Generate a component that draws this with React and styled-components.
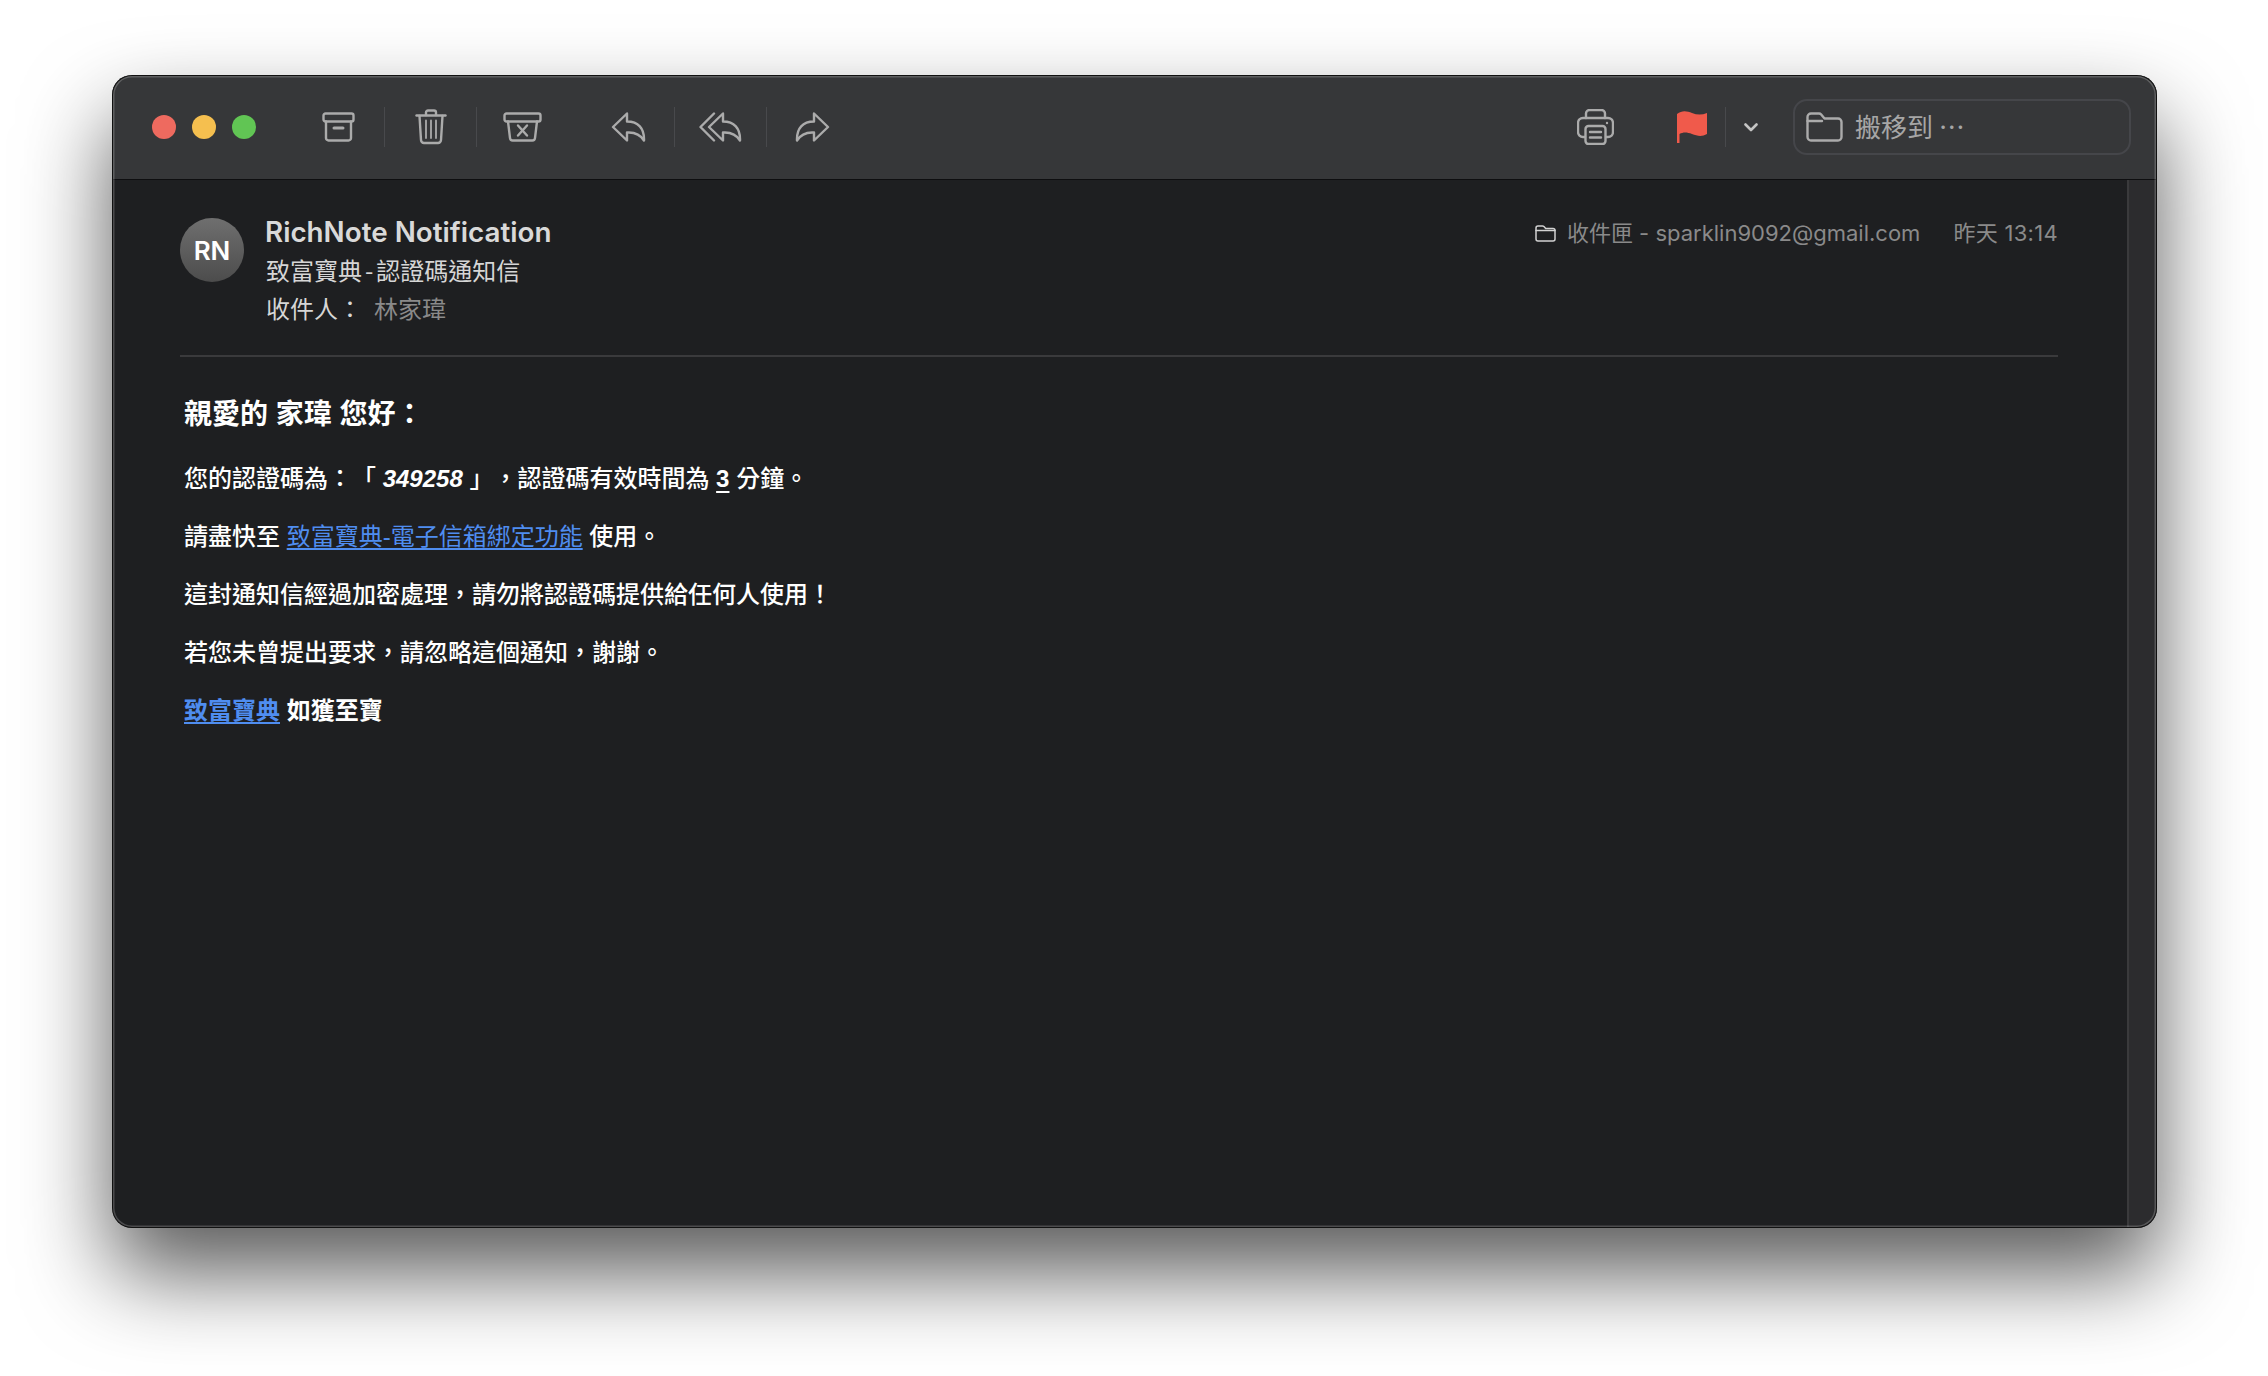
import React from "react";
import styled, { createGlobalStyle } from "styled-components";

const CJK = `"Noto Sans CJK TC", "Noto Sans CJK SC", sans-serif`;

const GlobalStyle = createGlobalStyle`
  html, body {
    margin: 0;
    background: #fff;
  }
`;

const Page = styled.div`
  box-sizing: border-box;
  width: 2268px;
  height: 1376px;
  padding: 75px 111px 0 112px;
  overflow: hidden;
  background: #fff;
`;

const Window = styled.div`
  width: 2045px;
  height: 1153px;
  display: flex;
  flex-direction: column;
  position: relative;
  border-radius: 20px;
  overflow: hidden;
  background: #1e1f21;
  box-shadow: 0 45px 88px rgba(0, 0, 0, 0.65);

  &::after {
    content: "";
    position: absolute;
    inset: 0;
    border-radius: 20px;
    box-shadow: inset 0 0 0 1px #111, inset 0 0 0 2.5px rgba(255, 255, 255, 0.2);
    pointer-events: none;
  }
`;

const Toolbar = styled.div`
  height: 105px;
  flex: none;
  display: flex;
  align-items: center;
  background: #363739;
  border-bottom: 1px solid #0e0e10;
  box-sizing: border-box;
  padding-left: 40px;
`;

const Lights = styled.div`
  display: flex;
  gap: 16px;
  margin-right: 37px;
`;

const Light = styled.span`
  width: 24px;
  height: 24px;
  border-radius: 50%;
  background: ${(p) => p.$color};
`;

const ToolGroup = styled.div`
  display: flex;
  align-items: center;
  margin-right: ${(p) => p.$gap || 0}px;
`;

const ToolSlot = styled.div`
  width: ${(p) => p.$width || 92}px;
  height: 40px;
  display: flex;
  align-items: center;
  justify-content: center;
  box-sizing: border-box;
  border-right: 1px solid ${(p) => (p.$divider ? "#48494c" : "transparent")};
`;

const Spacer = styled.div`
  flex: 1;
`;

const Glyph = styled.svg`
  display: block;
  flex: none;
  fill: none;
  stroke: ${(p) => p.$stroke || "#ababab"};
  stroke-width: ${(p) => p.$weight || 2.4};
  stroke-linecap: round;
  stroke-linejoin: round;
`;

const MoveBox = styled.div`
  width: 338px;
  height: 56px;
  margin: 0 26px 0 17px;
  box-sizing: border-box;
  display: flex;
  align-items: center;
  gap: 12px;
  padding-left: 11px;
  border: 2px solid #45464a;
  border-radius: 14px;
  color: #a6a6a6;
  font: 400 26px ${CJK};
  text-spacing-trim: space-all;
`;

const MoveLabel = styled.span`
  position: relative;
  top: -2px;
`;

const Main = styled.div`
  flex: 1;
  display: flex;
  min-height: 0;
`;

const Message = styled.div`
  flex: 1;
  box-sizing: border-box;
  padding: 38px 69px 0 68px;
`;

const Scroller = styled.div`
  width: 30px;
  flex: none;
  background: #2c2c2e;
  border-left: 2px solid #3a3a3c;
  box-sizing: border-box;
`;

const Header = styled.div`
  display: flex;
  align-items: flex-start;
  gap: 21px;
  height: 139px;
  border-bottom: 2px solid #3a3a3c;
  box-sizing: border-box;
`;

const Avatar = styled.div`
  width: 64px;
  height: 64px;
  flex: none;
  border-radius: 50%;
  display: flex;
  align-items: center;
  justify-content: center;
  background: linear-gradient(#6f6f6f, #4c4c4c);
  color: #fff;
  font: 600 26px Inter, sans-serif;
`;

const HeaderText = styled.div`
  flex: 1;
`;

const Name = styled.div`
  height: 32px;
  margin-top: -2px;
  color: #d9d9d9;
  font: 600 27.8px/32px Inter, sans-serif;
`;

const Subject = styled.div`
  margin: 3px 0 0 1px;
  color: #d6d6d6;
  font: 400 24px/38px ${CJK};
`;

const Hyphen = styled.span`
  margin: 0 3px;
`;

const Recipient = styled.div`
  margin-left: 1px;
  color: #d6d6d6;
  font: 400 24px/37px ${CJK};
  display: flex;
  gap: 12px;
`;

const Muted = styled.span`
  color: #8a8a8a;
`;

const Meta = styled.div`
  display: flex;
  align-items: center;
  height: 30px;
  color: #8a8a8a;
  font: 400 22px/30px Inter, ${CJK};
`;

const Mailbox = styled.div`
  display: flex;
  align-items: center;
  gap: 11px;
  margin-right: 33px;
`;

const Time = styled.span`
  letter-spacing: 0.3px;
`;

const Body = styled.div`
  padding: 39px 0 0 4px;
  color: #fff;
  font: 500 24px/58px "Liberation Sans", ${CJK};
  text-spacing-trim: space-all;
`;

const Greeting = styled.div`
  font-size: 28px;
  font-weight: 700;
  line-height: 38px;
  margin-bottom: 16px;
`;

const Line = styled.div`
  font-weight: ${(p) => (p.$bold ? 700 : 500)};
`;

const Link = styled.a`
  color: #4f8df0;
  font-weight: ${(p) => (p.$thin ? 400 : "inherit")};
  text-decoration: underline;
  text-underline-offset: 3px;
`;

const Code = styled.b`
  font-style: italic;
`;

const Underlined = styled.b`
  text-decoration: underline;
  text-underline-offset: 4px;
`;

const ReplyPath = "M16 1.5 L2 15 L16 28.5 V20.5 C23 20 29 22 33 28.5 C33.5 16 27 9.5 16 9.5 Z";

const Icons = {
  archive: (
    <Glyph width="33" height="30" viewBox="0 0 33 30">
      <rect x="1.5" y="1.5" width="30" height="8" rx="2" />
      <path d="M4 9.5 V26 a2.5 2.5 0 0 0 2.5 2.5 h20 a2.5 2.5 0 0 0 2.5 -2.5 V9.5" />
      <path d="M12 16 h9" strokeWidth="3" />
    </Glyph>
  ),
  trash: (
    <Glyph width="32" height="36" viewBox="0 0 32 36">
      <path d="M11 6 V3.5 a2 2 0 0 1 2 -2 h6 a2 2 0 0 1 2 2 V6" />
      <path d="M1.5 6.5 h29" />
      <path d="M4.5 7 L6 31 a3 3 0 0 0 3 3 h14 a3 3 0 0 0 3 -3 L27.5 7" />
      <path d="M11 11.5 V29 M16 11.5 V29 M21 11.5 V29" strokeWidth="1.8" />
    </Glyph>
  ),
  junk: (
    <Glyph width="39" height="30" viewBox="0 0 39 30">
      <rect x="1.5" y="1.5" width="36" height="8" rx="2" />
      <path d="M5 9.5 L7 26 a2.7 2.7 0 0 0 2.7 2.5 h19.6 a2.7 2.7 0 0 0 2.7 -2.5 L34 9.5" />
      <path d="M15 13.5 L24 23.5 M24 13.5 L15 23.5" />
    </Glyph>
  ),
  reply: (
    <Glyph width="35" height="30" viewBox="0 0 35 30">
      <path d={ReplyPath} />
    </Glyph>
  ),
  replyAll: (
    <Glyph width="43" height="30" viewBox="0 0 43 30">
      <path d="M24 1.5 L10 15 L24 28.5 V20.5 C31 20 37 22 41 28.5 C41.5 16 35 9.5 24 9.5 Z" />
      <path d="M15 1.5 L1.5 15 L15 28.5" />
    </Glyph>
  ),
  forward: (
    <Glyph width="35" height="30" viewBox="0 0 35 30">
      <path d={ReplyPath} transform="matrix(-1 0 0 1 35 0)" />
    </Glyph>
  ),
  print: (
    <Glyph width="37" height="36" viewBox="0 0 37 36">
      <path d="M9 9 V4.5 a3.5 3.5 0 0 1 3.5 -3.5 h12 a3.5 3.5 0 0 1 3.5 3.5 V9" />
      <path d="M8 28 H6 a5 5 0 0 1 -5 -5 V14 a5 5 0 0 1 5 -5 H31 a5 5 0 0 1 5 5 V23 a5 5 0 0 1 -5 5 H29" />
      <rect x="8.5" y="17" width="20" height="18" rx="3" />
      <path d="M13 23 h11 M13 28.5 h11" />
      <circle cx="30" cy="14" r="1.2" fill="#ababab" stroke="none" />
    </Glyph>
  ),
  flag: (
    <Glyph width="30" height="32" viewBox="0 0 30 32" $stroke="none">
      <path
        fill="#f05a4b"
        d="M0 3 C5 -1 10 0 15 2 C20 4 25 4 30 2 V23 C25 26 20 25 15 23 C10 21 6 21 2.5 23 V32 H0 Z"
      />
    </Glyph>
  ),
  chevron: (
    <Glyph width="14" height="9" viewBox="0 0 14 9" $stroke="#c4c4c4" $weight="2.6">
      <path d="M1.5 1.5 L7 7 L12.5 1.5" />
    </Glyph>
  ),
  folder: (
    <Glyph width="37" height="30" viewBox="0 0 37 30">
      <path d="M1.5 5 a3.5 3.5 0 0 1 3.5 -3.5 h8 a3 3 0 0 1 2.2 1 l3.3 4 H32 a3.5 3.5 0 0 1 3.5 3.5 V25 a3.5 3.5 0 0 1 -3.5 3.5 H5 A3.5 3.5 0 0 1 1.5 25 Z" />
      <path d="M1.5 9 H16" />
    </Glyph>
  ),
  mailbox: (
    <Glyph width="21" height="17" viewBox="0 0 21 17" $stroke="#d2d2d2" $weight="1.5">
      <path d="M1 3 a2 2 0 0 1 2 -2 h4.5 a2 2 0 0 1 1.4 .6 l1.8 2 H18 a2 2 0 0 1 2 2 V14 a2 2 0 0 1 -2 2 H3 a2 2 0 0 1 -2 -2 Z" />
      <path d="M1 5.5 H20" />
    </Glyph>
  ),
};

export default function App() {
  return (
    <>
      <GlobalStyle />
      <Page>
        <Window>
          <Toolbar>
            <Lights>
              <Light $color="#ee6a5f" />
              <Light $color="#f5bf4f" />
              <Light $color="#61c554" />
            </Lights>
            <ToolGroup $gap={14}>
              <ToolSlot $divider>{Icons.archive}</ToolSlot>
              <ToolSlot $divider>{Icons.trash}</ToolSlot>
              <ToolSlot>{Icons.junk}</ToolSlot>
            </ToolGroup>
            <ToolGroup>
              <ToolSlot $divider>{Icons.reply}</ToolSlot>
              <ToolSlot $divider>{Icons.replyAll}</ToolSlot>
              <ToolSlot>{Icons.forward}</ToolSlot>
            </ToolGroup>
            <Spacer />
            <ToolGroup $gap={16}>
              <ToolSlot>{Icons.print}</ToolSlot>
            </ToolGroup>
            <ToolGroup>
              <ToolSlot $width={68} $divider>{Icons.flag}</ToolSlot>
              <ToolSlot $width={50}>{Icons.chevron}</ToolSlot>
            </ToolGroup>
            <MoveBox>
              {Icons.folder}
              <MoveLabel>搬移到 ⋯</MoveLabel>
            </MoveBox>
          </Toolbar>
          <Main>
            <Message>
              <Header>
                <Avatar>RN</Avatar>
                <HeaderText>
                  <Name>RichNote Notification</Name>
                  <Subject>致富寶典<Hyphen>-</Hyphen>認證碼通知信</Subject>
                  <Recipient>
                    <span>收件人：</span>
                    <Muted>林家瑋</Muted>
                  </Recipient>
                </HeaderText>
                <Meta>
                  <Mailbox>
                    {Icons.mailbox}
                    <span>收件匣 - sparklin9092@gmail.com</span>
                  </Mailbox>
                  <Time>昨天 13:14</Time>
                </Meta>
              </Header>
              <Body>
                <Greeting>親愛的 家瑋 您好：</Greeting>
                <Line>
                  您的認證碼為：「 <Code>349258</Code> 」，認證碼有效時間為 <Underlined>3</Underlined> 分鐘。
                </Line>
                <Line>
                  請盡快至 <Link $thin>致富寶典-電子信箱綁定功能</Link> 使用。
                </Line>
                <Line>這封通知信經過加密處理，請勿將認證碼提供給任何人使用！</Line>
                <Line>若您未曾提出要求，請忽略這個通知，謝謝。</Line>
                <Line $bold>
                  <Link>致富寶典</Link> 如獲至寶
                </Line>
              </Body>
            </Message>
            <Scroller />
          </Main>
        </Window>
      </Page>
    </>
  );
}
